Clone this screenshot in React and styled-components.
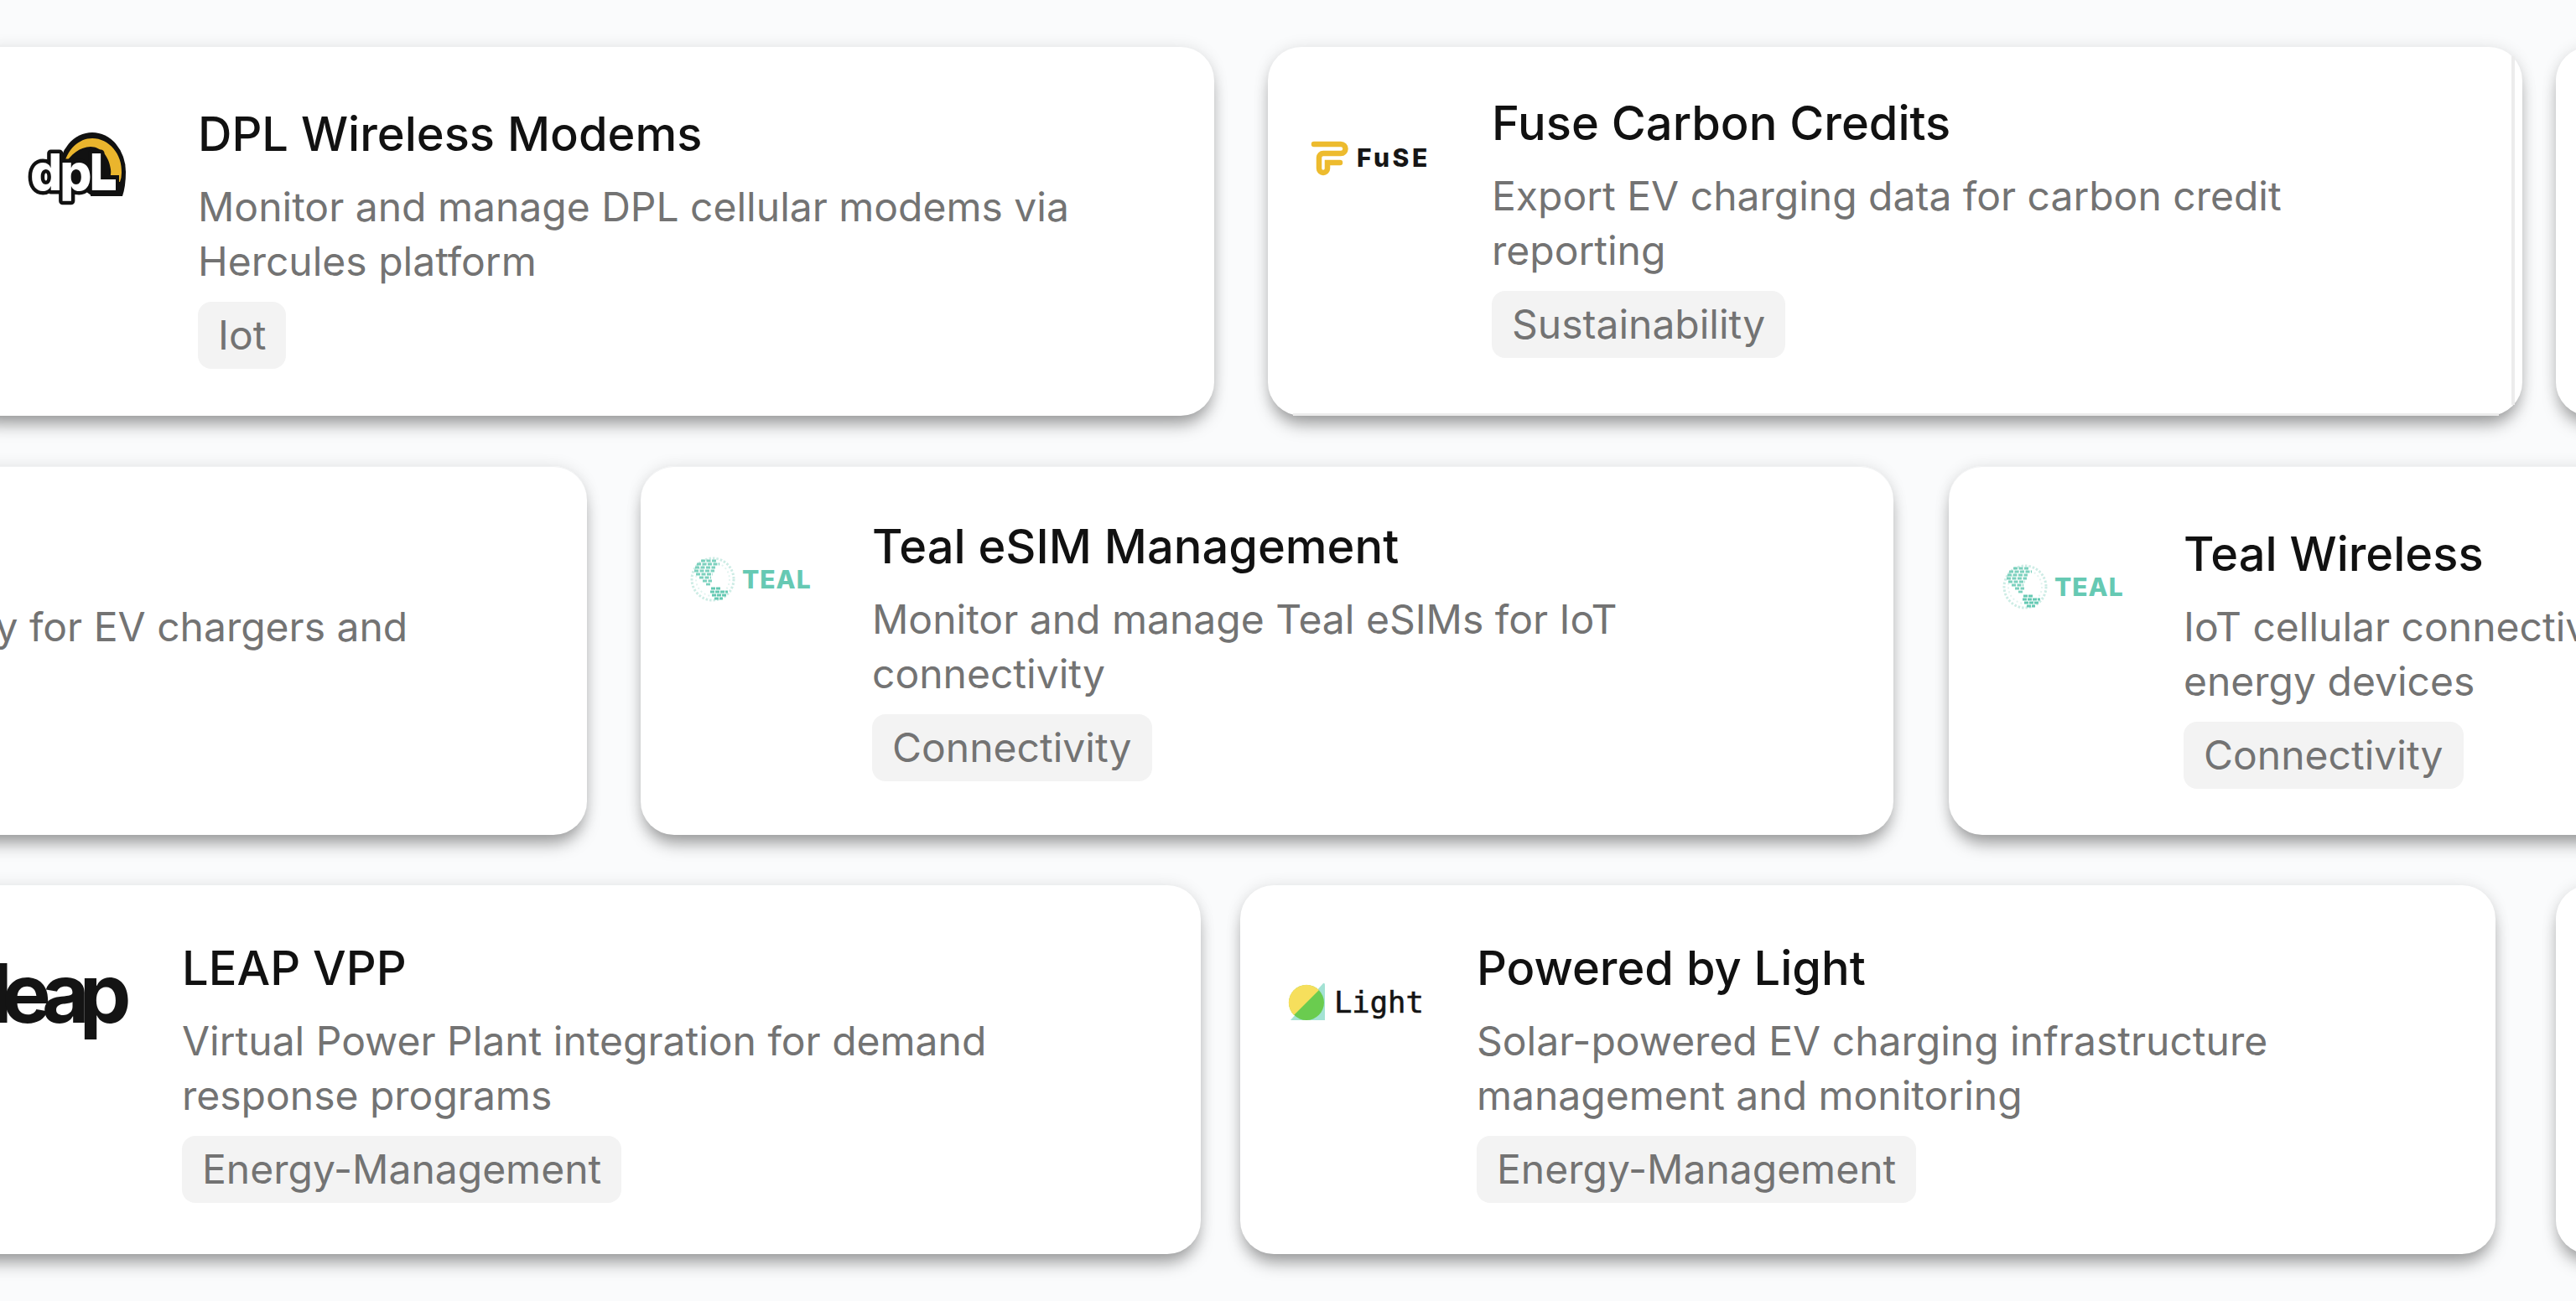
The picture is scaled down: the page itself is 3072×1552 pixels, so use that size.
import React from 'react';
import styled, { createGlobalStyle } from 'styled-components';

const GlobalStyle = createGlobalStyle`
  html, body {
    margin: 0;
    padding: 0;
    background: #fafbfc;
    font-family: 'Inter', 'Liberation Sans', sans-serif;
  }
`;

const Page = styled.div`
  width: 3072px;
  height: 1552px;
  padding-top: 56px;
  box-sizing: border-box;
  overflow: hidden;
  display: flex;
  flex-direction: column;
  gap: 60px;
`;

const Row = styled.div`
  display: flex;
  height: 440px;
`;

const Card = styled.article`
  position: relative;
  flex: none;
  display: flex;
  align-items: flex-start;
  box-sizing: border-box;
  width: ${(p) => p.$width}px;
  margin-left: ${(p) => p.$left}px;
  padding-left: ${(p) => p.$pad}px;
  background: #fff;
  border-radius: 40px;
  box-shadow:
    ${(p) => (p.$edge ? 'inset 0 1px 0 #f0f1f2,' : '')}
    0 15px 20px -5px rgba(0, 0, 0, 0.36),
    0 0 18px rgba(0, 0, 0, 0.1);
`;

const UnderEdge = styled.span`
  position: absolute;
  right: 9px;
  top: 11px;
  bottom: 13px;
  width: 4px;
  background: #ececec;
`;

const UnderBottom = styled.span`
  position: absolute;
  left: 30px;
  right: 28px;
  bottom: 0;
  height: 3px;
  background: #ececec;
`;

const LogoSlot = styled.div`
  flex: none;
  width: ${(p) => p.$width}px;
  margin-top: ${(p) => p.$top}px;

  svg {
    display: block;
    overflow: visible;
  }
`;

const Body = styled.div`
  width: 1100px;
  margin-top: ${(p) => p.$top}px;
`;

const Title = styled.h3`
  margin: 0 0 22px;
  font-size: 56px;
  line-height: 64px;
  font-weight: 500;
  color: #111;
`;

const Desc = styled.p`
  margin: 0 0 16px;
  font-size: 48px;
  line-height: 65px;
  font-weight: 400;
  color: #737373;
`;

const Tag = styled.span`
  display: inline-block;
  height: 80px;
  line-height: 80px;
  padding: 0 24px;
  border-radius: 16px;
  background: #f3f3f3;
  color: #737373;
  font-size: 48px;
`;

const DplLogo = () => (
  <svg width="117" height="84" viewBox="33 158 117 84">
    <path d="M70 205 A40 47 0 0 1 150 205 Q150 222 146 234 L110 234 Z" fill="#111" />
    <path
      d="M76 198 C80 178 94 165 110 165 C130 165 146 184 145 206 Q145 212 143 217 L130 215 Q133 208 132 202 C130 186 120 175 108 175 C96 175 84 184 76 198 Z"
      fill="#eab52d"
    />
    <rect x="108" y="209" width="34" height="25" fill="#111" />
    <text
      x="36"
      y="227"
      fontFamily="Inter, sans-serif"
      fontSize="60"
      fontWeight="800"
      letterSpacing="-3"
      fill="#fff"
      stroke="#111"
      strokeWidth="9"
      strokeLinejoin="round"
      paintOrder="stroke"
    >
      dpl
    </text>
    <rect x="112" y="214" width="26" height="13" fill="#fff" />
  </svg>
);

const FuseLogo = () => (
  <svg width="140" height="46" viewBox="24 26 140 46">
    <path
      d="M27 32 H59 A5.5 5.5 0 0 1 59 43 H38 A5 5 0 0 0 33 48 V61 A5 5 0 0 0 43 61 V54 H58"
      fill="none"
      stroke="#edbb2e"
      strokeWidth="6.5"
      strokeLinecap="round"
    />
    <text
      x="78"
      y="59"
      fontFamily="Inter, sans-serif"
      fontSize="30"
      fontWeight="800"
      letterSpacing="3.5"
      fill="#161616"
    >
      FuSE
    </text>
  </svg>
);

const TEAL = '#66c9b3';

const TealLogo = () => (
  <svg width="150" height="52" viewBox="0 0 150 52">
    <circle cx="27" cy="25" r="25" fill="none" stroke="#cdece5" strokeWidth="3" strokeDasharray="2.5 2" />
    <circle cx="27" cy="25" r="20" fill="none" stroke="#e2f4f0" strokeWidth="2" strokeDasharray="2 3" />
    <g stroke={TEAL} strokeWidth="2.8" strokeDasharray="5 1.5" opacity="0.85">
      <path d="M13 3 H31" />
      <path d="M8 7 H35" />
      <path d="M6 11 H30" />
      <path d="M5 15 H29" />
      <path d="M7 19 H27" />
      <path d="M11 23 H25" />
      <path d="M15 27 H26" />
      <path d="M19 31 H24" />
    </g>
    <g stroke={TEAL} strokeWidth="3" strokeDasharray="5 1">
      <path d="M25 36 H37" />
      <path d="M24 40 H45" />
      <path d="M26 44 H43" />
      <path d="M29 48 H39" />
    </g>
    <text
      x="62"
      y="36"
      fontFamily="Inter, sans-serif"
      fontSize="30"
      fontWeight="800"
      letterSpacing="1"
      fill={TEAL}
    >
      TEAL
    </text>
  </svg>
);

const LeapLogo = () => (
  <svg width="170" height="90" viewBox="0 0 170 90">
    <text
      x="0"
      y="70"
      fontFamily="Inter, sans-serif"
      fontSize="98"
      fontWeight="700"
      letterSpacing="-12"
      fill="#141414"
    >
      leap
    </text>
  </svg>
);

const LightLogo = () => (
  <svg width="165" height="46" viewBox="0 0 165 46">
    <path d="M2 44 L41 0 Q43 -1 43 3 V44 Z" fill="#a3e2d4" />
    <circle cx="21" cy="23" r="21" fill="#6acc4f" />
    <path d="M6 38 A21 21 0 0 1 36 8 Z" fill="#f6df5c" />
    <text
      x="54"
      y="35"
      fontFamily="'DejaVu Sans Mono', monospace"
      fontSize="35.5"
      fontWeight="400"
      stroke="#141414"
      strokeWidth="0.6"
      fill="#141414"
    >
      Light
    </text>
  </svg>
);

const rows = [
  [
    {
      id: 'dpl', width: 1493, left: -45, pad: 78, slot: 203, logoTop: 102, top: 72,
      logo: <DplLogo />, title: 'DPL Wireless Modems',
      desc: 'Monitor and manage DPL cellular modems via Hercules platform', tag: 'Iot',
    },
    {
      id: 'fuse', width: 1496, left: 64, pad: 52, slot: 215, logoTop: 110, top: 59, under: true,
      logo: <FuseLogo />, title: 'Fuse Carbon Credits',
      desc: 'Export EV charging data for carbon credit reporting', tag: 'Sustainability',
    },
    { id: 'next-1', width: 1494, left: 40 },
  ],
  [
    {
      id: 'teal-loop', width: 1494, left: -794, pad: 64, slot: 214, logoTop: 119, top: 73, edge: true,
      logo: <TealLogo />, title: 'Teal Wireless',
      desc: 'IoT cellular connectivity for EV chargers and energy devices', tag: 'Connectivity',
    },
    {
      id: 'esim', width: 1494, left: 64, pad: 59, slot: 217, logoTop: 110, top: 64, edge: true,
      logo: <TealLogo />, title: 'Teal eSIM Management',
      desc: 'Monitor and manage Teal eSIMs for IoT connectivity', tag: 'Connectivity',
    },
    {
      id: 'teal', width: 1494, left: 66, pad: 64, slot: 216, logoTop: 119, top: 73, edge: true,
      logo: <TealLogo />, title: 'Teal Wireless',
      desc: 'IoT cellular connectivity for EV chargers and energy devices', tag: 'Connectivity',
    },
  ],
  [
    {
      id: 'leap', width: 1494, left: -62, pad: 50, slot: 229, logoTop: 94, top: 67,
      logo: <LeapLogo />, title: 'LEAP VPP',
      desc: 'Virtual Power Plant integration for demand response programs', tag: 'Energy-Management',
    },
    {
      id: 'light', width: 1497, left: 47, pad: 58, slot: 224, logoTop: 117, top: 67,
      logo: <LightLogo />, title: 'Powered by Light',
      desc: 'Solar-powered EV charging infrastructure management and monitoring', tag: 'Energy-Management',
    },
    { id: 'next-3', width: 1494, left: 72 },
  ],
];

const App = () => (
  <Page>
    <GlobalStyle />
    {rows.map((row, i) => (
      <Row key={i}>
        {row.map((c) => (
          <Card key={c.id} $width={c.width} $left={c.left} $pad={c.pad || 0} $edge={c.edge}>
            {c.title && (
              <>
                <LogoSlot $width={c.slot} $top={c.logoTop}>
                  {c.logo}
                </LogoSlot>
                <Body $top={c.top}>
                  <Title>{c.title}</Title>
                  <Desc>{c.desc}</Desc>
                  <Tag>{c.tag}</Tag>
                </Body>
              </>
            )}
            {c.under && (
              <>
                <UnderEdge />
                <UnderBottom />
              </>
            )}
          </Card>
        ))}
      </Row>
    ))}
  </Page>
);

export default App;
